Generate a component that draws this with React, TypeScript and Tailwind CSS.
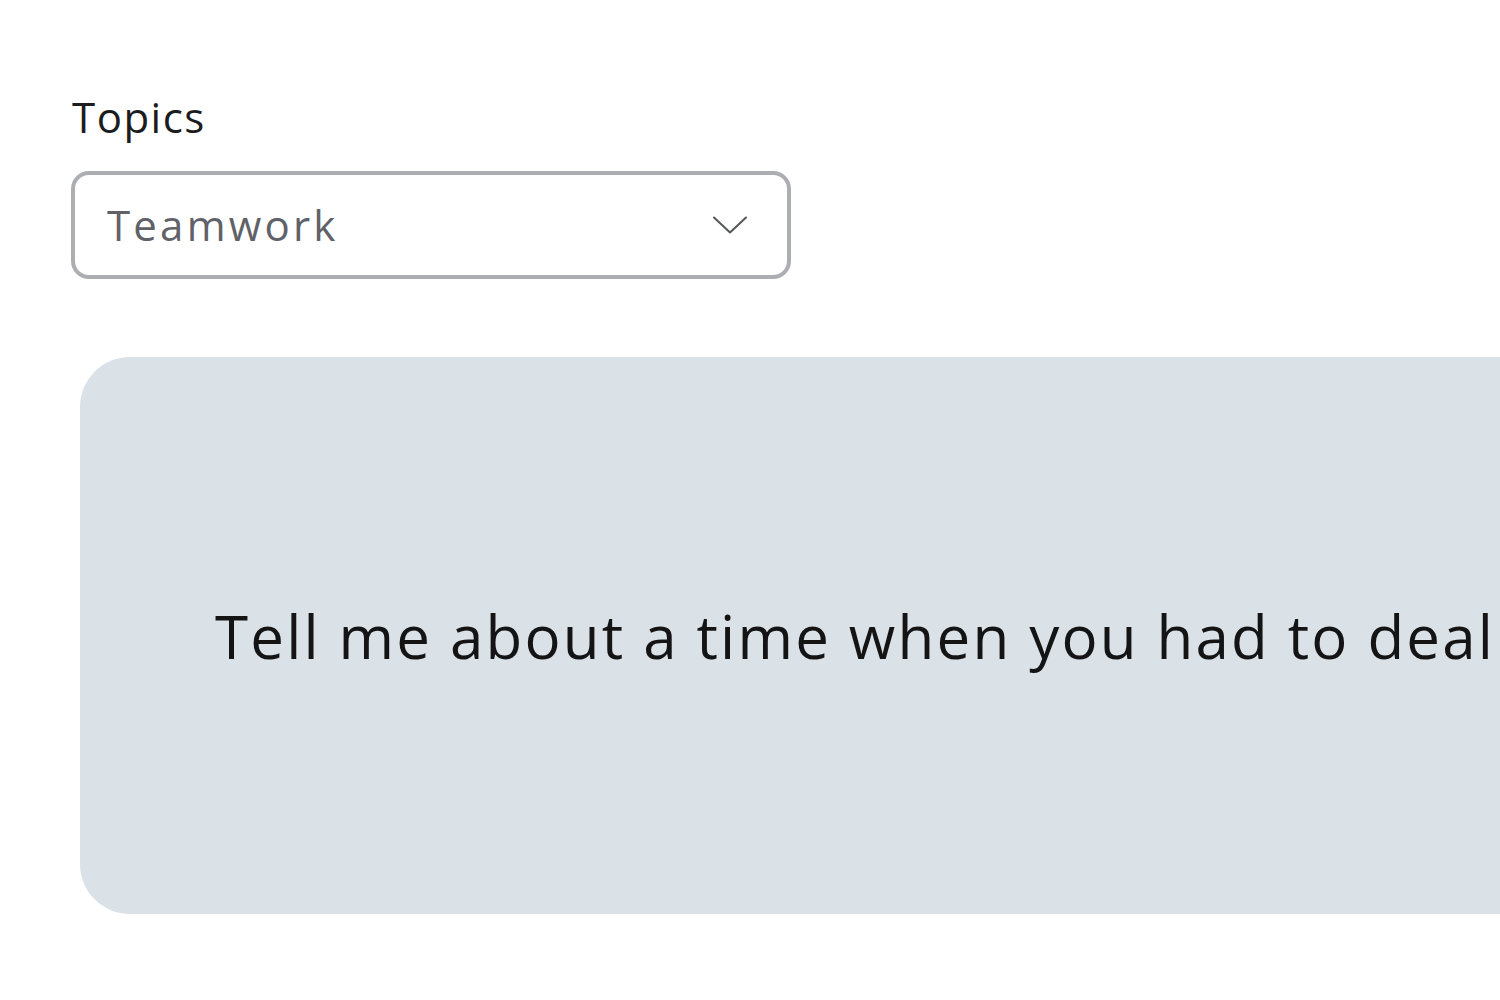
const FONT = { fontFamily: '"Open Sans", "Noto Sans", sans-serif' }

function Chevron() {
  return (
    <svg width="34" height="18" viewBox="0 0 34 18" fill="none" className="text-[#55575c]">
      <path d="M1 1.5 L17 16.5 L33 1.5" stroke="currentColor" strokeWidth="2" strokeLinecap="round" strokeLinejoin="round" />
    </svg>
  )
}

export default function App() {
  return (
    <div className="w-[1500px] h-[1000px] overflow-hidden bg-white" style={FONT}>
      <div className="pt-[92px] pl-[72px]">
        {/* Topic picker */}
        <label className="block text-[42px] leading-[50px] text-[#1c1c1e] tracking-[1.5px]">Topics</label>
        <div className="mt-[29px] -ml-[1px] w-[720px] h-[108px] rounded-[18px] border-[4px] border-[#adaeb2] flex items-center justify-between pl-[32px] pr-[40px]">
          <span className="text-[42px] leading-none text-[#606268] tracking-[3.2px]">Teamwork</span>
          <Chevron />
        </div>

        {/* Question card */}
        <div className="mt-[78px] ml-[8px] w-[1600px] h-[557px] rounded-[50px] bg-[#dae1e7] flex items-center pl-[135px]">
          <p className="whitespace-nowrap text-[60px] leading-none text-[#141414] tracking-[2.2px]">
            Tell me about a time when you had to deal with a difficult team member.
          </p>
        </div>
      </div>
    </div>
  )
}
